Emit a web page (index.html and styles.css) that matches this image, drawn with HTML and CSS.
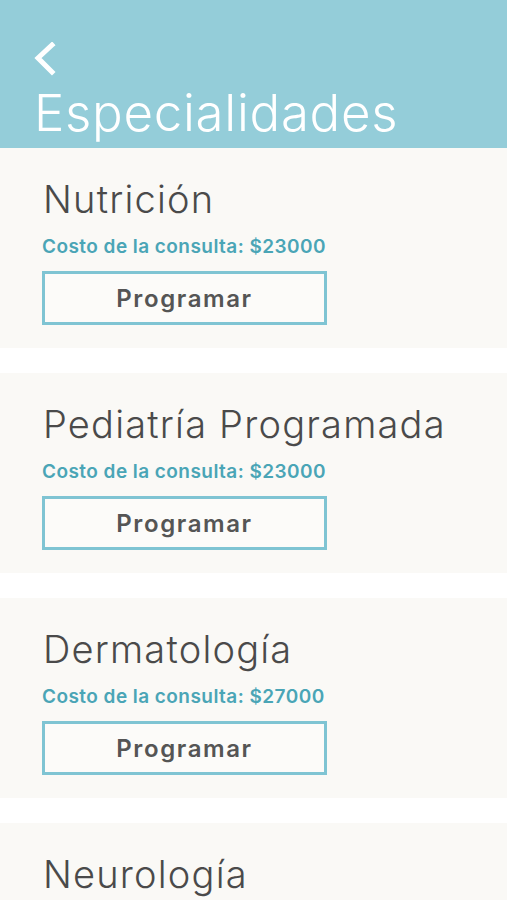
FILE: index.html
```html
<!DOCTYPE html>
<html lang="es">
<head>
<meta charset="utf-8">
<title>Especialidades</title>
<link rel="stylesheet" href="styles.css">
</head>
<body>
<header class="topbar">
  <svg class="back" width="24" height="34" viewBox="0 0 24 34" aria-hidden="true">
    <polyline points="18,3 4,16 18,30" fill="none" stroke="#ffffff" stroke-width="5" stroke-linecap="square" stroke-linejoin="miter"/>
  </svg>
  <h1 class="page-title">Especialidades</h1>
</header>
<main class="list">
  <section class="card">
    <h2 class="card-title">Nutrición</h2>
    <p class="cost">Costo de la consulta: $23000</p>
    <button class="btn">Programar</button>
  </section>
  <section class="card">
    <h2 class="card-title">Pediatría Programada</h2>
    <p class="cost">Costo de la consulta: $23000</p>
    <button class="btn">Programar</button>
  </section>
  <section class="card">
    <h2 class="card-title">Dermatología</h2>
    <p class="cost">Costo de la consulta: $27000</p>
    <button class="btn">Programar</button>
  </section>
  <section class="card">
    <h2 class="card-title">Neurología</h2>
    <p class="cost">Costo de la consulta: $25000</p>
    <button class="btn">Programar</button>
  </section>
</main>
</body>
</html>
```

FILE: styles.css
```css
html, body {
  margin: 0;
  padding: 0;
  background: #ffffff;
  font-family: Inter, "Noto Sans", sans-serif;
}

.topbar {
  background: #94cdd9;
  height: 148px;
  box-sizing: border-box;
  padding: 42px 0 0 34px;
  display: flex;
  flex-direction: column;
}

.back {
  display: block;
}

.page-title {
  margin: 9px 0 0;
  font-weight: 300;
  font-size: 51px;
  line-height: 56px;
  color: #ffffff;
  letter-spacing: 0.7px;
}

.list {
  display: flex;
  flex-direction: column;
  gap: 25px;
}

.card {
  background: #faf9f6;
  padding: 27px 43px 23px;
  display: flex;
  flex-direction: column;
  align-items: flex-start;
}

.card-title {
  margin: 0;
  font-weight: 300;
  font-size: 38px;
  line-height: 48px;
  color: #4a4a4a;
  letter-spacing: 1.2px;
}

.cost {
  margin: 12px 0 0 -1px;
  font-weight: 600;
  font-size: 19px;
  line-height: 24px;
  color: #4aa5b6;
  letter-spacing: 0.45px;
}

.btn {
  margin: 12px 0 0 -1px;
  width: 285px;
  height: 54px;
  box-sizing: border-box;
  border: 3px solid #7fc4d3;
  background: #fcfbf9;
  font-family: Inter, "Noto Sans", sans-serif;
  font-weight: 600;
  font-size: 24px;
  letter-spacing: 1.6px;
  color: #555555;
  padding: 0;
}
```
